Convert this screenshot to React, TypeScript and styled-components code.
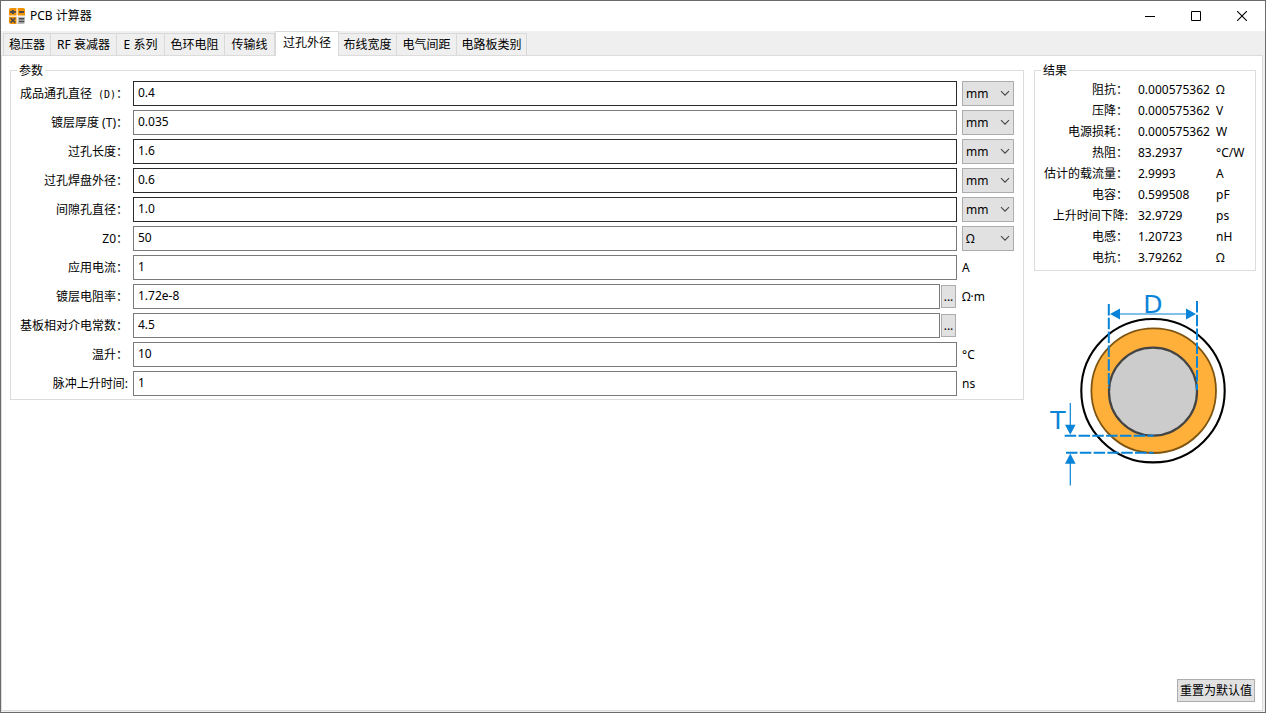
import React from "react";
import styled, { createGlobalStyle } from "styled-components";

const GlobalStyle = createGlobalStyle`
  * { box-sizing: border-box; }
  body {
    margin: 0;
    background: #fff;
  }
  body, button, input, select {
    font-family: "Noto Sans", "Noto Sans CJK SC", sans-serif;
    font-size: 12px;
    color: #000;
  }
`;

const Window = styled.div`
  min-height: 100vh;
  display: flex;
  flex-direction: column;
  border: 1px solid #6b6b6b;
  background: #efefef;
`;

const TitleBar = styled.header`
  height: 30px;
  display: flex;
  align-items: center;
  background: #fff;
`;

const AppTitle = styled.h1`
  flex: 1;
  display: flex;
  align-items: center;
  gap: 5px;
  margin: 0;
  padding-left: 8px;
  font-size: 12px;
  line-height: 18px;
  font-weight: 400;
`;

const CaptionButton = styled.button`
  width: 46px;
  height: 30px;
  display: flex;
  align-items: center;
  justify-content: center;
  padding: 0;
  border: 0;
  background: transparent;
`;

const TabBar = styled.nav`
  height: 24px;
  display: flex;
  align-items: flex-end;
  padding-left: 2px;
`;

const Tab = styled.button<{ $width: number; $active?: boolean }>`
  flex: 0 0 ${(p) => p.$width}px;
  height: ${(p) => (p.$active ? 25 : 22)}px;
  margin: 0 0 ${(p) => (p.$active ? -1 : 0)}px;
  padding: 0 0 ${(p) => (p.$active ? 2 : 0)}px;
  border: solid #d9d9d9;
  border-width: ${(p) => (p.$active ? "1px 1px 0 1px" : "1px 1px 0 0")};
  background: ${(p) => (p.$active ? "#fff" : "#efefef")};
  line-height: 18px;
  white-space: nowrap;
  position: relative;
  &:first-child { border-left-width: 1px; }
`;

const Pane = styled.main`
  flex: 1;
  display: flex;
  align-items: stretch;
  gap: 10px;
  margin: 0 2px 1px 0;
  padding: 8px 6px 8px 8px;
  border: 1px solid #dcdcdc;
  background: #fff;
`;

const ParamColumn = styled.section`
  flex: 1;
  min-width: 0;
`;

const ResultColumn = styled.aside`
  width: 222px;
  display: flex;
  flex-direction: column;
`;

const Group = styled.fieldset`
  min-width: 0;
  margin: 0;
  padding: 0 8px 2px;
  border: 1px solid #dcdcdc;
`;

const GroupTitle = styled.legend`
  height: 13px;
  margin-left: -2px;
  padding: 0 2px;
  line-height: 14px;
`;

const ParamRows = styled.div`
  display: flex;
  flex-direction: column;
  gap: 4px;
  padding: 4px 1px 1px;
`;

const ParamRow = styled.div`
  height: 25px;
  display: grid;
  grid-template-columns: 108px minmax(0, 1fr) 52px;
  column-gap: 5px;
`;

const ParamLabel = styled.label`
  height: 25px;
  line-height: 25px;
  text-align: right;
  white-space: nowrap;
`;

const Fixed = styled.span`
  font-family: "DejaVu Sans Mono", monospace;
  font-size: 10px;
  white-space: pre;
`;

const Field = styled.div`
  display: flex;
  align-items: center;
  gap: 1px;
`;

const TextBox = styled.input<{ $strong?: boolean }>`
  flex: 1;
  min-width: 0;
  height: 25px;
  padding: 0 4px 2px;
  border: 1px solid ${(p) => (p.$strong ? "#2b2b2b" : "#7a7a7a")};
  border-radius: 0;
  background: #fff;
  outline: none;
`;

const PickButton = styled.button`
  width: 15px;
  height: 23px;
  margin-right: 1px;
  padding: 0;
  border: 1px solid #adadad;
  background: #e1e1e1;
`;

const UnitBox = styled.div`
  position: relative;
  height: 25px;
  svg {
    position: absolute;
    right: 4px;
    top: 9px;
    pointer-events: none;
  }
`;

const UnitSelect = styled.select`
  appearance: none;
  width: 100%;
  height: 25px;
  padding: 0 16px 1px 3px;
  border: 1px solid #adadad;
  border-radius: 0;
  background: #e1e1e1;
  outline: none;
`;

const Unit = styled.span`
  height: 25px;
  line-height: 25px;
  white-space: nowrap;
`;

const ResultTable = styled.table`
  width: 100%;
  margin-top: 2px;
  table-layout: fixed;
  border-collapse: collapse;
  th, td {
    height: 21px;
    padding: 0;
    line-height: 20px;
    font-weight: 400;
    text-align: left;
    white-space: nowrap;
  }
  th {
    width: 85px;
    text-align: right;
  }
  td:nth-child(2) {
    width: 88px;
    padding-left: 10px;
  }
`;

const Diagram = styled.svg`
  display: block;
  margin-top: 9px;
  text {
    font-family: "DejaVu Sans", sans-serif;
    font-size: 25px;
    fill: #0984d8;
    text-anchor: middle;
  }
`;

const ResetButton = styled.button`
  align-self: flex-end;
  width: 78px;
  height: 23px;
  margin-top: auto;
  margin-right: 1px;
  padding: 0 0 1px;
  border: 1px solid #adadad;
  background: #e1e1e1;
  white-space: nowrap;
`;

const tabs = [
  { name: "稳压器", width: 48 },
  { name: "RF 衰减器", width: 66 },
  { name: "E 系列", width: 48 },
  { name: "色环电阻", width: 60 },
  { name: "传输线", width: 50 },
  { name: "过孔外径", width: 64, active: true },
  { name: "布线宽度", width: 58 },
  { name: "电气间距", width: 60 },
  { name: "电路板类别", width: 70 },
];

type Param = {
  id: string;
  label: React.ReactNode;
  value: string;
  unit?: string;
  select?: boolean;
  pick?: boolean;
  strong?: boolean;
};

const params: Param[] = [
  { id: "hole", label: <>成品通孔直径<Fixed> (D)</Fixed>：</>, value: "0.4", unit: "mm", select: true, strong: true },
  { id: "plating", label: "镀层厚度 (T)：", value: "0.035", unit: "mm", select: true },
  { id: "length", label: "过孔长度：", value: "1.6", unit: "mm", select: true, strong: true },
  { id: "pad", label: "过孔焊盘外径：", value: "0.6", unit: "mm", select: true, strong: true },
  { id: "clearance", label: "间隙孔直径：", value: "1.0", unit: "mm", select: true, strong: true },
  { id: "z0", label: "Z0：", value: "50", unit: "Ω", select: true },
  { id: "current", label: "应用电流：", value: "1", unit: "A" },
  { id: "resistivity", label: "镀层电阻率：", value: "1.72e-8", unit: "Ω·m", pick: true },
  { id: "permittivity", label: "基板相对介电常数：", value: "4.5", pick: true },
  { id: "temp", label: "温升：", value: "10", unit: "°C" },
  { id: "rise", label: "脉冲上升时间:", value: "1", unit: "ns" },
];

const results = [
  ["阻抗：", "0.000575362", "Ω"],
  ["压降：", "0.000575362", "V"],
  ["电源损耗：", "0.000575362", "W"],
  ["热阻：", "83.2937", "°C/W"],
  ["估计的载流量：", "2.9993", "A"],
  ["电容：", "0.599508", "pF"],
  ["上升时间下降:", "32.9729", "ps"],
  ["电感：", "1.20723", "nH"],
  ["电抗：", "3.79262", "Ω"],
];

const CalculatorIcon = () => (
  <svg width="16" height="16" viewBox="0 0 16 16" aria-hidden="true">
    <path d="M2 0H7.5V7.5H0V2Q0 0 2 0Z" fill="#f29100" />
    <path d="M8.7 0H14Q16 0 16 2V7.5H8.7Z" fill="#f29100" />
    <path d="M0 8.7H7.5V16H2Q0 16 0 14Z" fill="#f29100" />
    <path d="M8.7 8.7H16V14Q16 16 14 16H8.7Z" fill="#b9b9b9" />
    <g stroke="#4d4d4d" fill="none">
      <path d="M1 4H6.8M3.9 2V6M10 4H15" strokeWidth="2" />
      <path d="M1.6 10L6.2 14.6M6.2 10L1.6 14.6" strokeWidth="1.7" />
      <path d="M10 10.8H15M10 13.6H15" strokeWidth="1.5" />
    </g>
  </svg>
);

const ViaDiagram = () => (
  <Diagram width="222" height="210" viewBox="0 0 222 210" role="img" aria-label="过孔外径">
    <circle cx="119" cy="110.7" r="71.7" fill="#fff" stroke="#000" strokeWidth="2.1" />
    <circle cx="119.7" cy="110.7" r="62.3" fill="#ffb03b" stroke="#7f5510" strokeWidth="1.8" />
    <circle cx="119" cy="111.7" r="44" fill="#ccc" stroke="#444" strokeWidth="2.2" />
    <g stroke="#0984d8" strokeWidth="2" strokeDasharray="11.5 2.3" fill="none">
      <path d="M74.8 24V108" />
      <path d="M163 21V110" />
      <path d="M30.7 155.8H119.5" />
      <path d="M32 172.8H119.5" />
    </g>
    <g stroke="#0984d8" fill="none">
      <path d="M80 34H158M36.3 123V150M36.3 178V205.5" strokeWidth="1.2" />
    </g>
    <path
      d="M76 34L86 28.6V39.4ZM162 34L152 28.6V39.4ZM36.3 154.7L31 144.7H41.6ZM36.3 173.4L31 183.7H41.6Z"
      fill="#0984d8"
    />
    <text x="119" y="33">D</text>
    <text x="24" y="149">T</text>
  </Diagram>
);

export default function App() {
  return (
    <>
      <GlobalStyle />
      <Window>
        <TitleBar>
          <AppTitle>
            <CalculatorIcon />
            PCB 计算器
          </AppTitle>
          <CaptionButton aria-label="最小化">
            <svg width="10" height="11" viewBox="0 0 10 11"><path d="M0 5.5H10" stroke="#000" /></svg>
          </CaptionButton>
          <CaptionButton aria-label="最大化">
            <svg width="10" height="10" viewBox="0 0 10 10"><path d="M.5 .5H9.5V9.5H.5Z" stroke="#000" fill="none" /></svg>
          </CaptionButton>
          <CaptionButton aria-label="关闭">
            <svg width="10" height="10" viewBox="0 0 10 10"><path d="M0 0L10 10M10 0L0 10" stroke="#000" strokeWidth="1.1" /></svg>
          </CaptionButton>
        </TitleBar>
        <TabBar>
          {tabs.map((t) => (
            <Tab key={t.name} $width={t.width} $active={t.active}>{t.name}</Tab>
          ))}
        </TabBar>
        <Pane>
          <ParamColumn>
            <Group>
              <GroupTitle>参数</GroupTitle>
              <ParamRows>
                {params.map((p) => (
                  <ParamRow key={p.id}>
                    <ParamLabel htmlFor={p.id}>{p.label}</ParamLabel>
                    <Field>
                      <TextBox id={p.id} type="text" defaultValue={p.value} $strong={p.strong} />
                      {p.pick && <PickButton>...</PickButton>}
                    </Field>
                    {p.select ? (
                      <UnitBox>
                        <UnitSelect aria-label="单位">
                          <option>{p.unit}</option>
                        </UnitSelect>
                        <svg width="10" height="7" viewBox="0 0 10 7">
                          <path d="M1 1.2L5 5.2L9 1.2" stroke="#444" strokeWidth="1.1" fill="none" />
                        </svg>
                      </UnitBox>
                    ) : (
                      <Unit>{p.unit}</Unit>
                    )}
                  </ParamRow>
                ))}
              </ParamRows>
            </Group>
          </ParamColumn>
          <ResultColumn>
            <Group>
              <GroupTitle>结果</GroupTitle>
              <ResultTable>
                <tbody>
                  {results.map(([name, value, unit]) => (
                    <tr key={name}>
                      <th scope="row">{name}</th>
                      <td>{value}</td>
                      <td>{unit}</td>
                    </tr>
                  ))}
                </tbody>
              </ResultTable>
            </Group>
            <ViaDiagram />
            <ResetButton>重置为默认值</ResetButton>
          </ResultColumn>
        </Pane>
      </Window>
    </>
  );
}
